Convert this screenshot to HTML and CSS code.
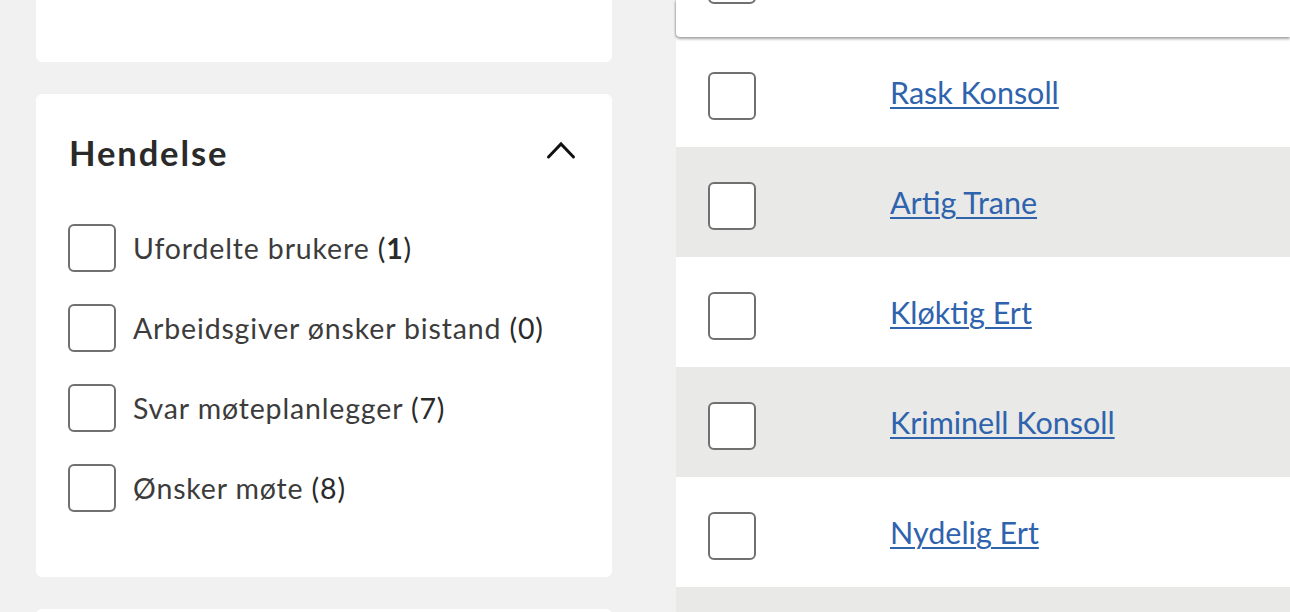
FILE: index.html
```html
<!DOCTYPE html>
<html lang="no">
<head>
<meta charset="utf-8">
<link rel="stylesheet" href="styles.css">
</head>
<body>
<div class="layout">
  <aside class="filters">
    <div class="card card-cut"></div>
    <section class="card filter-card">
      <div class="filter-head">
        <h2 class="filter-title">Hendelse</h2>
        <svg class="chevron" width="30" height="20" viewBox="0 0 30 20" aria-hidden="true">
          <polyline points="2.5,17 15,4 27.5,17" fill="none" stroke="#111" stroke-width="3" stroke-linecap="round" stroke-linejoin="miter"/>
        </svg>
      </div>
      <ul class="filter-list">
        <li class="filter-item"><span class="box"></span><span class="label">Ufordelte brukere <span class="count">(<b>1</b>)</span></span></li>
        <li class="filter-item"><span class="box"></span><span class="label">Arbeidsgiver ønsker bistand <span class="count">(0)</span></span></li>
        <li class="filter-item"><span class="box"></span><span class="label">Svar møteplanlegger <span class="count">(7)</span></span></li>
        <li class="filter-item"><span class="box"></span><span class="label">Ønsker møte <span class="count">(8)</span></span></li>
      </ul>
    </section>
    <div class="card card-next"></div>
  </aside>
  <main class="table">
    <div class="table-head"><span class="box"></span></div>
    <div class="row"><span class="box"></span><a class="name" href="#">Rask Konsoll</a></div>
    <div class="row alt"><span class="box"></span><a class="name" href="#">Artig Trane</a></div>
    <div class="row"><span class="box"></span><a class="name" href="#">Kløktig Ert</a></div>
    <div class="row alt"><span class="box"></span><a class="name" href="#">Kriminell Konsoll</a></div>
    <div class="row"><span class="box"></span><a class="name" href="#">Nydelig Ert</a></div>
    <div class="row alt"></div>
  </main>
</div>
</body>
</html>
```
FILE: styles.css
```css
* { box-sizing: border-box; }
html, body { margin: 0; padding: 0; }
body {
  background: #f1f1f1;
  font-family: "Lato", "Noto Sans", sans-serif;
  color: #262626;
  width: 1290px;
  height: 612px;
  overflow: hidden;
}
.layout {
  display: flex;
  gap: 64px;
  padding-left: 36px;
}
.filters {
  width: 576px;
  flex: none;
  display: flex;
  flex-direction: column;
  gap: 32px;
}
.card {
  background: #fff;
  border-radius: 6px;
}
.card-cut {
  height: 62px;
  border-top-left-radius: 0;
  border-top-right-radius: 0;
}
.card-next { height: 40px; }
.filter-card {
  padding: 32px 36px 65px 32px;
}
.filter-head {
  height: 52px;
  display: flex;
  align-items: center;
  justify-content: space-between;
  margin-bottom: 46px;
  padding-left: 1px;
}
.filter-title {
  margin: 0;
  font-size: 34.5px;
  font-weight: 700;
  color: #2a2a2a;
  letter-spacing: 1.9px;
}
.chevron { margin-top: -4px; }
.filter-list {
  list-style: none;
  margin: 0;
  padding: 0;
  display: flex;
  flex-direction: column;
  gap: 32px;
}
.filter-item {
  display: flex;
  align-items: center;
  gap: 17px;
  height: 48px;
}
.box {
  width: 48px;
  height: 48px;
  flex: none;
  background: #fff;
  border: 2px solid #707070;
  border-radius: 6px;
}
.label {
  font-size: 28.5px;
  color: #3c3c3c;
  letter-spacing: 0.85px;
}
.count { color: #2a2a2a; }
.count b { font-weight: 700; }
.table {
  flex: 1;
  min-width: 0;
}
.table-head {
  position: relative;
  z-index: 1;
  height: 37px;
  background: #fff;
  border-bottom-left-radius: 4px;
  box-shadow: 0 2px 3px rgba(0,0,0,0.35), -1px 0 2px rgba(0,0,0,0.15);
  display: flex;
  align-items: flex-end;
  padding: 0 0 33px 32px;
  overflow: hidden;
}
.table-head .box { flex: none; }
.row {
  height: 110px;
  display: grid;
  grid-template-columns: 182px auto;
  align-items: center;
  padding-left: 32px;
  background: #fff;
}
.row .box { margin-top: 7px; }
.row.alt { background: #e9e9e7; }
.name {
  font-size: 30.5px;
  color: #2f63ad;
  text-decoration: underline;
  text-underline-offset: 3px;
  text-decoration-thickness: 2px;
  justify-self: start;
}
```
